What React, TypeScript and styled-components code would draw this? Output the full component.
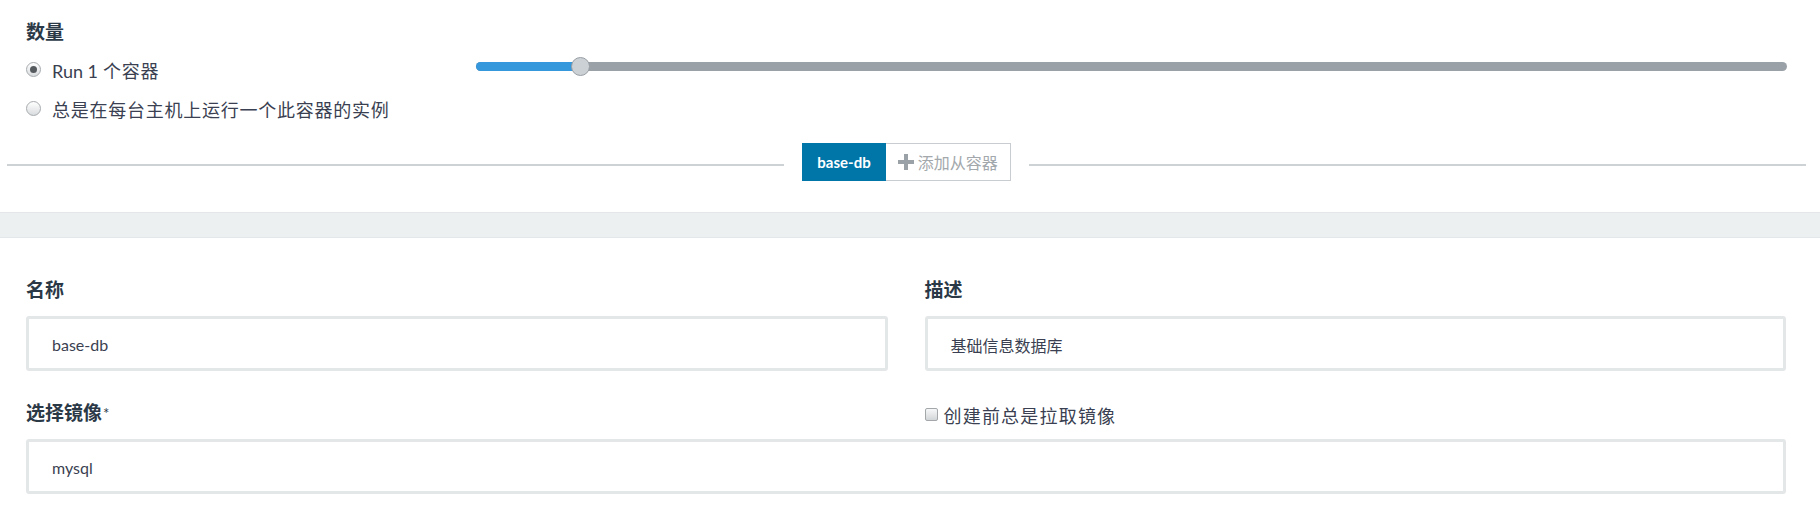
import React from 'react'
import styled, { createGlobalStyle } from 'styled-components'

const GlobalStyle = createGlobalStyle`
  html, body {
    margin: 0;
    padding: 0;
    background: #fff;
  }
  body {
    font-family: Lato, "Noto Sans CJK SC", sans-serif;
    color: #3a3f51;
  }
`

const Root = styled.div`
  width: 1820px;
  height: 508px;
  overflow: hidden;
  background: #fff;
`

const Top = styled.section`
  padding: 20px 33px 0 26px;
`

const Label = styled.div`
  font-size: 19px;
  line-height: 24px;
  font-weight: 700;
  color: #2b3947;
`

const QtyRow = styled.div`
  display: grid;
  grid-template-columns: 450px 1fr;
  margin-top: 6px;
`

const Options = styled.div`
  display: flex;
  flex-direction: column;
`

const Option = styled.label`
  display: flex;
  align-items: center;
  gap: 11px;
  height: 39px;
  font-size: 18px;
  letter-spacing: 0.75px;
  color: #3a3f51;
`

const Latin = styled.span`
  letter-spacing: 0;
  margin-right: 5px;
`

const Radio = styled.span<{ $checked?: boolean }>`
  position: relative;
  box-sizing: border-box;
  width: 15px;
  height: 15px;
  border-radius: 50%;
  border: 1px solid #a7abae;
  background: linear-gradient(#ffffff, #d9dcde);
  flex-shrink: 0;

  &::after {
    content: '';
    display: ${(p) => (p.$checked ? 'block' : 'none')};
    position: absolute;
    left: 3px;
    top: 3px;
    width: 7px;
    height: 7px;
    border-radius: 50%;
    background: #555a5e;
  }
`

const SliderBox = styled.div`
  display: flex;
  align-items: center;
  height: 39px;
  margin-top: -3px;
`

const Track = styled.div`
  position: relative;
  flex: 1;
  height: 9px;
  border-radius: 5px;
  background: #9aa1a7;
`

const Fill = styled.div`
  height: 100%;
  border-radius: 5px 0 0 5px;
  background: #3598dc;
`

const Thumb = styled.div`
  position: absolute;
  top: 50%;
  width: 19px;
  height: 19px;
  margin: -9.5px 0 0 -9.5px;
  box-sizing: border-box;
  border-radius: 50%;
  border: 1px solid #979ea4;
  background: #ccd1d5;
`

const DividerRow = styled.div`
  display: flex;
  align-items: center;
  gap: 18px;
  margin: 15px 14px 0 7px;
`

const Line = styled.div`
  flex: 1;
  height: 2px;
  margin-top: 6px;
  background: #cdd2d5;
`

const Tabs = styled.div`
  display: flex;
`

const Tab = styled.button<{ $active?: boolean }>`
  display: flex;
  align-items: center;
  gap: 4px;
  height: 38px;
  box-sizing: border-box;
  padding: 0 ${(p) => (p.$active ? '14px' : '12px')};
  border: 1px solid ${(p) => (p.$active ? '#0075a8' : '#c9cdd1')};
  border-left-width: ${(p) => (p.$active ? '1px' : '0')};
  background: ${(p) => (p.$active ? '#0075a8' : '#fff')};
  color: ${(p) => (p.$active ? '#fff' : '#a3a8ac')};
  font-family: Lato, "Noto Sans CJK SC", sans-serif;
  font-size: ${(p) => (p.$active ? '15px' : '16px')};
  font-weight: ${(p) => (p.$active ? 700 : 400)};
  cursor: pointer;
`

const Band = styled.div`
  height: 24px;
  margin-top: 31px;
  background: #ecf0f1;
  border-top: 1px solid #e3e7e9;
  border-bottom: 1px solid #e3e7e9;
`

const Form = styled.section`
  display: grid;
  grid-template-columns: 1fr 1fr;
  column-gap: 37px;
  padding: 40px 34px 0 26px;
`

const Field = styled.div<{ $wide?: boolean }>`
  display: flex;
  flex-direction: column;
  grid-column: ${(p) => (p.$wide ? '1 / -1' : 'auto')};
`

const FieldHead = styled.div`
  display: flex;
  align-items: center;
  height: 24px;
`

const Required = styled.span`
  font-weight: 400;
  font-size: 15px;
  margin-left: 1px;
  vertical-align: top;
`

const Check = styled.label`
  display: flex;
  align-items: center;
  gap: 6px;
  font-size: 18px;
  letter-spacing: 1.2px;
  color: #3a3f51;
  margin-top: 3px;
`

const CheckBox = styled.span`
  box-sizing: border-box;
  width: 13px;
  height: 13px;
  border-radius: 2px;
  border: 1px solid #a3a7aa;
  background: linear-gradient(#f6f7f8, #d3d6d8);
`

const Input = styled.div`
  display: flex;
  align-items: center;
  box-sizing: border-box;
  height: 55px;
  margin-top: 14px;
  padding: 2px 23px 0;
  border: 3px solid #e4e7e8;
  border-radius: 3px;
  font-size: 16px;
  color: #3a3f51;
  background: #fff;
`

const RowGap = styled.div`
  grid-column: 1 / -1;
  height: 30px;
`

const PlusIcon = () => (
  <svg width="16" height="16" viewBox="0 0 16 16">
    <rect x="6" y="0" width="4" height="16" fill="#9aa2a8" />
    <rect x="0" y="6" width="16" height="4" fill="#9aa2a8" />
  </svg>
)

const Slider: React.FC<{ value: number; max: number }> = ({ value, max }) => {
  const pct = (value / max) * 100
  return (
    <SliderBox>
      <Track>
        <Fill style={{ width: `${pct}%` }} />
        <Thumb style={{ left: `${pct}%` }} />
      </Track>
    </SliderBox>
  )
}

export default function App() {
  return (
    <Root>
      <GlobalStyle />
      <Top>
        <Label>数量</Label>
        <QtyRow>
          <Options>
            <Option>
              <Radio $checked />
              <span>
                <Latin>Run 1</Latin>个容器
              </span>
            </Option>
            <Option>
              <Radio />
              <span>总是在每台主机上运行一个此容器的实例</span>
            </Option>
          </Options>
          <Slider value={1} max={12.5} />
        </QtyRow>
      </Top>
      <DividerRow>
        <Line />
        <Tabs>
          <Tab $active>base-db</Tab>
          <Tab>
            <PlusIcon />
            添加从容器
          </Tab>
        </Tabs>
        <Line />
      </DividerRow>
      <Band />
      <Form>
        <Field>
          <FieldHead>
            <Label>名称</Label>
          </FieldHead>
          <Input>base-db</Input>
        </Field>
        <Field>
          <FieldHead>
            <Label>描述</Label>
          </FieldHead>
          <Input>基础信息数据库</Input>
        </Field>
        <RowGap />
        <FieldHead>
          <Label>
            选择镜像<Required>*</Required>
          </Label>
        </FieldHead>
        <FieldHead>
          <Check>
            <CheckBox />
            创建前总是拉取镜像
          </Check>
        </FieldHead>
        <Field $wide>
          <Input>mysql</Input>
        </Field>
      </Form>
    </Root>
  )
}
